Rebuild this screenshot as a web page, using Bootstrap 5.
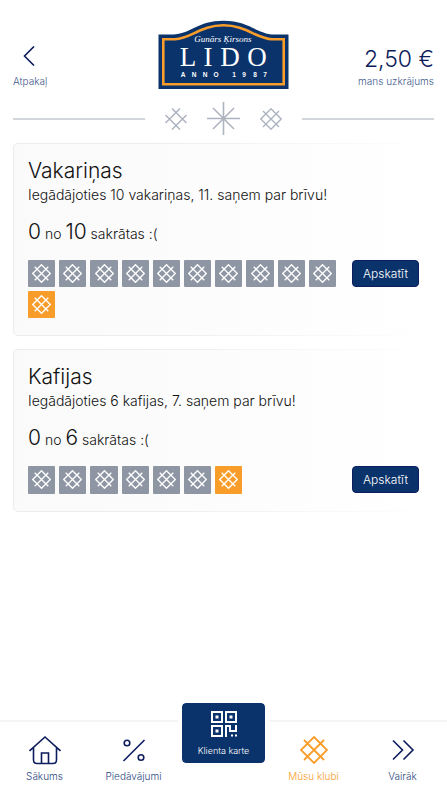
<!DOCTYPE html>
<html lang="lv">
<head>
<meta charset="utf-8">
<meta name="viewport" content="width=device-width, initial-scale=1">
<title>Lido – Mūsu klubi</title>
<link rel="stylesheet" href="https://cdn.jsdelivr.net/npm/bootstrap@5.3.0/dist/css/bootstrap.min.css">
<style>
  :root { --navy: #0b336b; --ink: #0c1c5c; --label: #43598c; --tile: #8e95a3; --orange: #f99d2a; }
  body { font-family: Inter, "Liberation Sans", sans-serif; font-weight: 300; color: #111; background: #fff; }
  svg { display: block; fill: none; stroke: currentColor; }
  a { text-decoration: none; }
  .top-bar { padding: 20px 13px 0; }
  .top-side { flex: 1 1 0; color: var(--ink); padding-top: 24px; }
  .top-side small { font-size: 10px; line-height: 14px; color: var(--label); }
  .back-link { color: var(--ink); }
  .back-link svg { margin: 2px 0 8px 10px; }
  .balance { font-size: 23px; line-height: 30px; }
  .ornament { padding: 11px 13px 8px; color: #aeb4bf; }
  .ornament hr { flex: 1 1 0; margin: 0; border-top: 2px solid #d3d6db; opacity: 1; }
  .clubs { padding: 0 13px; }
  .club { border: 1px solid transparent; border-radius: 5px; padding: 14px 14px 17px; margin-bottom: 13px;
    background: linear-gradient(90deg, #fafafa, #fff) padding-box, linear-gradient(90deg, #ececec 30%, #fff) border-box; }
  .club h2 { font-size: 21px; line-height: 26px; font-weight: 300; margin: 0; }
  .club p { font-size: 14px; line-height: 22px; margin: 0; }
  .club .tally { line-height: 30px; margin: 11px 0; }
  .tally b { font-size: 21px; font-weight: 300; }
  .stamps { display: grid; grid-template-columns: repeat(10, 1fr); gap: 4px; flex: 1 1 0; }
  .stamp { aspect-ratio: 1; background: var(--tile); color: #fff; border-radius: 1px; }
  .stamp.gift { background: var(--orange); }
  .view-btn { width: 67px; height: 27px; padding: 0; font-size: 12px; font-weight: 300; color: #fff;
    background: var(--navy); border: 1px solid #0b1f60; border-radius: 4px; }
  .view-btn:hover { background: var(--ink); color: #fff; }
  .tab-bar { border-top: 2px solid #f5f5f5; background: #fff; height: 80px; }
  .tab-bar a { flex: 1 1 0; color: var(--ink); font-size: 10px; line-height: 14px; padding-top: 13px; }
  .tab-bar a svg { margin-bottom: 4px; }
  .tab-bar span { color: #2d4780; }
  .tab-bar .current, .tab-bar .current span { color: var(--orange); }
  .tab-bar .card-tab { padding: 0; }
  .card-tab div { margin: -23px 0 0; width: 91px; background: var(--navy); background-clip: padding-box; border: 4px solid #fff;
    border-radius: 8px; padding: 8px 0 5px; }
  .tab-bar .card-tab span { color: #fff; font-size: 9px; }
  .tab-bar .card-tab svg { margin-bottom: 7px; }
</style>
<script src="https://cdn.jsdelivr.net/npm/bootstrap@5.3.0/dist/js/bootstrap.bundle.min.js"></script>
</head>
<body class="d-flex flex-column min-vh-100">
<svg width="0" height="0" class="position-absolute" aria-hidden="true">
  <symbol id="auseklis" viewBox="0 0 28 28">
    <path d="M14 1 27 14 14 27 1 14ZM4 4 24 24M24 4 4 24"/>
  </symbol>
</svg>

<header class="top-bar d-flex align-items-start">
  <div class="top-side">
    <a href="#" class="back-link d-inline-block">
      <svg width="12" height="20" viewBox="0 0 12 20" stroke-width="1.6"><path d="M11 .5 1.5 10 11 19.5"/></svg>
      <small class="d-block">Atpakaļ</small>
    </a>
  </div>
  <svg width="131" height="70" viewBox="158 20 131 70" role="img" aria-label="Lido">
    <path fill="#0b336b" stroke="none" d="M158.500 34.500H173C190 34 198 20.700 223.500 20.700S257 34 274 34.500H288.500V89H158.500Z"/>
    <path stroke="#f99d2a" stroke-width="2.600" d="M163.300 39.200H175C191 38.500 201 25.200 223.500 25.200S256 38.500 272 39.200H283.700V84.200H163.300Z"/>
    <g fill="#fff" stroke="none" text-anchor="middle">
      <text x="223" y="42" font-family="Liberation Serif, serif" font-style="italic" font-size="9">Gunārs Ķirsons</text>
      <text y="66" font-family="Liberation Serif, serif" font-size="27"><tspan x="188">L</tspan><tspan x="208">I</tspan><tspan x="230">D</tspan><tspan x="257">O</tspan></text>
      <text y="76.500" font-family="Liberation Sans, sans-serif" font-weight="700" font-size="6.500"><tspan x="183">A</tspan><tspan x="194">N</tspan><tspan x="205">N</tspan><tspan x="216">O</tspan><tspan x="234">1</tspan><tspan x="244">9</tspan><tspan x="255">8</tspan><tspan x="265">7</tspan></text>
    </g>
  </svg>
  <div class="top-side text-end">
    <div class="balance">2,50 €</div>
    <small class="d-block">mans uzkrājums</small>
  </div>
</header>

<div class="ornament d-flex align-items-center gap-3" aria-hidden="true">
  <hr>
  <div class="d-flex align-items-center gap-3">
    <svg class="mx-1" width="22" height="22" viewBox="0 0 22 22" stroke-width="1.500"><path d="M7 .5 21.500 15M15 .5 .5 15M.5 7 15 21.500M21.500 7 7 21.500"/></svg>
    <svg width="33" height="33" viewBox="0 0 33 33" stroke-width="1.600"><path d="M16.500 0V33M0 16.500H33M6 6 27 27M27 6 6 27"/></svg>
    <svg class="mx-1" width="22" height="22" viewBox="0 0 22 22" stroke-width="1.400"><path d="M11 .8 21.200 11 11 21.200 .8 11ZM3 3 19 19M19 3 3 19"/></svg>
  </div>
  <hr>
</div>

<main class="clubs d-flex flex-column flex-grow-1">
  <section class="club">
    <h2>Vakariņas</h2>
    <p>Iegādājoties 10 vakariņas, 11. saņem par brīvu!</p>
    <p class="tally"><b>0</b> no <b>10</b> sakrātas :(</p>
    <div class="d-flex align-items-start gap-3">
      <div class="stamps" data-paid="10"></div>
      <button type="button" class="btn view-btn">Apskatīt</button>
    </div>
  </section>
  <section class="club">
    <h2>Kafijas</h2>
    <p>Iegādājoties 6 kafijas, 7. saņem par brīvu!</p>
    <p class="tally"><b>0</b> no <b>6</b> sakrātas :(</p>
    <div class="d-flex align-items-start gap-3">
      <div class="stamps" data-paid="6"></div>
      <button type="button" class="btn view-btn">Apskatīt</button>
    </div>
  </section>
</main>

<nav class="tab-bar d-flex text-center sticky-bottom">
  <a href="#" class="d-flex flex-column align-items-center">
    <svg width="32" height="30" viewBox="0 0 32 30" stroke-width="1.600"><path d="M.5 16 16 2 31.500 16M4.500 13V25Q4.500 28.500 8 28.500H24Q27.500 28.500 27.500 25V13M12.500 28.500V18H19.500V28.500"/></svg>
    <span>Sākums</span>
  </a>
  <a href="#" class="d-flex flex-column align-items-center">
    <svg width="24" height="30" viewBox="0 0 24 30" stroke-width="1.600"><path d="M1.500 26 22.500 5"/><circle cx="5" cy="8" r="2.800"/><circle cx="19" cy="22.500" r="2.800"/></svg>
    <span>Piedāvājumi</span>
  </a>
  <a href="#" class="card-tab d-flex flex-column align-items-center">
    <div class="d-flex flex-column align-items-center">
      <svg width="26" height="26" viewBox="0 0 26 26" stroke-width="2"><g stroke="#fff"><path d="M1 1H11V11H1ZM15 1H25V11H15ZM1 15H11V25H1ZM15 26V15H19V20H25V14M20 24.500H22M24 24.500H26"/><path d="M4.500 6H7.500M18.500 6H21.500M4.500 20H7.500" stroke-width="3"/></g></svg>
      <span>Klienta karte</span>
    </div>
  </a>
  <a href="#" class="current d-flex flex-column align-items-center" aria-current="page">
    <svg width="30" height="30" viewBox="-1 -1 30 30" stroke-width="1.800"><use href="#auseklis" width="28" height="28"/></svg>
    <span>Mūsu klubi</span>
  </a>
  <a href="#" class="d-flex flex-column align-items-center">
    <svg width="24" height="30" viewBox="0 0 24 30" stroke-width="1.600"><path d="M2 5.500 11.500 15 2 24.500M12.500 5.500 22 15 12.500 24.500"/></svg>
    <span>Vairāk</span>
  </a>
</nav>

<script>
  // Each club shows its paid stamps followed by one gift stamp.
  document.querySelectorAll('.stamps').forEach(function (box) {
    var total = Number(box.dataset.paid) + 1;
    for (var i = 1; i <= total; i++) {
      box.insertAdjacentHTML('beforeend',
        '<div class="stamp d-flex align-items-center justify-content-center' + (i === total ? ' gift' : '') + '">' +
        '<svg width="19" height="19" viewBox="0 0 28 28" stroke-width="2"><use href="#auseklis" width="28" height="28"/></svg></div>');
    }
  });
</script>
</body>
</html>
